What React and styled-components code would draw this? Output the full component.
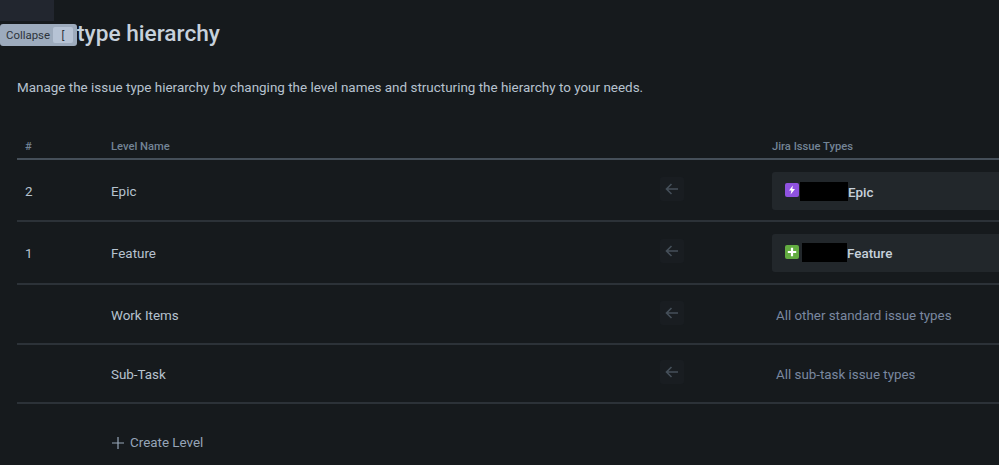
import React from 'react'
import styled, { createGlobalStyle } from 'styled-components'

const GlobalStyle = createGlobalStyle`
    html, body {
        margin: 0;
        padding: 0;
        background-color: #161a1d;
    }

    body {
        font-family: Roboto, "Noto Sans", sans-serif;
        color: #c7d1db;
    }
`;

const Page = styled.div`
    position: relative;
    width: 999px;
    height: 465px;
    overflow: hidden;
    padding: 19px 0 0 17px;
    box-sizing: border-box;
    background-color: #161a1d;
`;

const Corner = styled.div`
    position: absolute;
    top: 0;
    left: 0;
    width: 54px;
    height: 21px;
    background-color: #22262f;
`;

const CollapseTip = styled.div`
    position: absolute;
    top: 24px;
    left: 0;
    width: 77px;
    height: 22px;
    display: flex;
    align-items: center;
    gap: 3px;
    padding-left: 6px;
    box-sizing: border-box;
    border-radius: 3px;
    background-color: #9dabbd;
    color: #2c333a;
    font-size: 11.4px;
`;

const KeyHint = styled.span`
    width: 20px;
    height: 16px;
    display: flex;
    align-items: center;
    justify-content: center;
    border-radius: 2px;
    background-color: #b6c3d5;
    font-size: 11px;
`;

const Title = styled.h1`
    margin: 0;
    padding-left: 60px;
    font-size: 22.7px;
    line-height: 30px;
    font-weight: 500;
    color: #c7d1db;
`;

const Description = styled.p`
    margin: 29px 0 0;
    font-size: 13.45px;
    line-height: 20px;
    color: #b6c2cf;
`;

const Table = styled.div`
    margin-top: 39px;
`;

const Row = styled.div`
    display: grid;
    grid-template-columns: 94px 545px 116px 1fr;
    align-items: center;
    height: ${props => props.$height}px;
    box-sizing: border-box;
    border-bottom: 2px solid #2c3238;
`;

const HeaderRow = styled(Row)`
    border-bottom-color: #454f59;
    align-items: flex-start;
    padding-top: 2px;
`;

const HeaderCell = styled.div`
    padding-left: ${props => props.$inset || 0}px;
    font-size: 11.2px;
    line-height: 16px;
    font-weight: 500;
    color: #738496;
`;

const Cell = styled.div`
    padding-left: ${props => props.$inset || 0}px;
    padding-top: 2px;
    font-size: 13.4px;
    color: #b6c2cf;
`;

const ArrowBox = styled.div`
    width: 24px;
    height: 24px;
    margin: -3px 0 0 4px;
    display: flex;
    align-items: center;
    justify-content: center;
    border-radius: 3px;
    background-color: #191d21;
    color: #454f59;
`;

const TypeChip = styled.div`
    height: 38px;
    width: 260px;
    margin-top: ${props => props.$shift || 0}px;
    display: flex;
    align-items: center;
    padding-left: 13px;
    box-sizing: border-box;
    border-radius: 3px;
    background-color: #22272b;
    font-size: 13.4px;
    font-weight: 500;
    color: #c7d1db;
`;

const TypeIcon = styled.span`
    width: 14px;
    height: 14px;
    margin-top: -2px;
    display: flex;
    align-items: center;
    justify-content: center;
    border-radius: 2px;
    background-color: ${props => props.$color};
`;

const Redaction = styled.span`
    width: ${props => props.$width}px;
    height: 19px;
    margin-left: ${props => props.$gap}px;
    background-color: #000;
`;

const TypeName = styled.span`
    padding-top: 2px;
`;

const MutedText = styled.span`
    padding-left: 4px;
    padding-top: 2px;
    font-size: 13.35px;
    color: #7a88a0;
`;

const CreateLevel = styled.div`
    display: flex;
    align-items: center;
    gap: 6px;
    margin: 31px 0 0 95px;
    font-size: 13.4px;
    color: #96a5b8;
`;

const Arrow = () => (
    <svg width="16" height="16" viewBox="0 0 16 16" fill="none" stroke="currentColor" strokeWidth="1.6">
        <path d="M14 8H2.5M7.5 3L2.5 8L7.5 13" />
    </svg>
);

const Bolt = () => (
    <svg width="10" height="10" viewBox="0 0 10 10" fill="#fff">
        <path d="M5.8 0.5L2 5.6H4.4L3.6 9.5L8 4.1H5.4Z" />
    </svg>
);

const Plus = () => (
    <svg width="10" height="10" viewBox="0 0 10 10" stroke="#fff" strokeWidth="2.2">
        <path d="M5 0.8V9.2M0.8 5H9.2" />
    </svg>
);

const PlusThin = () => (
    <svg width="12" height="12" viewBox="0 0 12 12" stroke="currentColor" strokeWidth="1.2">
        <path d="M6 0V12M0 6H12" />
    </svg>
);

const levels = [
    { num: '2', name: 'Epic', height: 62, type: 'Epic', color: '#8f52e0', icon: <Bolt />, gap: 1, width: 48, shift: 2 },
    { num: '1', name: 'Feature', height: 63, type: 'Feature', color: '#63ac41', icon: <Plus />, gap: 3, width: 45 },
    { name: 'Work Items', height: 60, other: 'All other standard issue types' },
    { name: 'Sub-Task', height: 59, other: 'All sub-task issue types' },
];

const App = () => {
    return (
        <Page>
            <GlobalStyle />
            <Title>type hierarchy</Title>
            <Description>
                Manage the issue type hierarchy by changing the level names and structuring the hierarchy to your needs.
            </Description>
            <Table>
                <HeaderRow $height={23}>
                    <HeaderCell $inset={8}>#</HeaderCell>
                    <HeaderCell>Level Name</HeaderCell>
                    <div />
                    <HeaderCell>Jira Issue Types</HeaderCell>
                </HeaderRow>
                {levels.map(level => (
                    <Row key={level.name} $height={level.height}>
                        <Cell $inset={8}>{level.num}</Cell>
                        <Cell>{level.name}</Cell>
                        <ArrowBox><Arrow /></ArrowBox>
                        {level.type ? (
                            <TypeChip $shift={level.shift}>
                                <TypeIcon $color={level.color}>{level.icon}</TypeIcon>
                                <Redaction $gap={level.gap} $width={level.width} />
                                <TypeName>{level.type}</TypeName>
                            </TypeChip>
                        ) : (
                            <MutedText>{level.other}</MutedText>
                        )}
                    </Row>
                ))}
            </Table>
            <CreateLevel><PlusThin />Create Level</CreateLevel>
            <Corner />
            <CollapseTip>Collapse<KeyHint>[</KeyHint></CollapseTip>
        </Page>
    )
}

export default App
